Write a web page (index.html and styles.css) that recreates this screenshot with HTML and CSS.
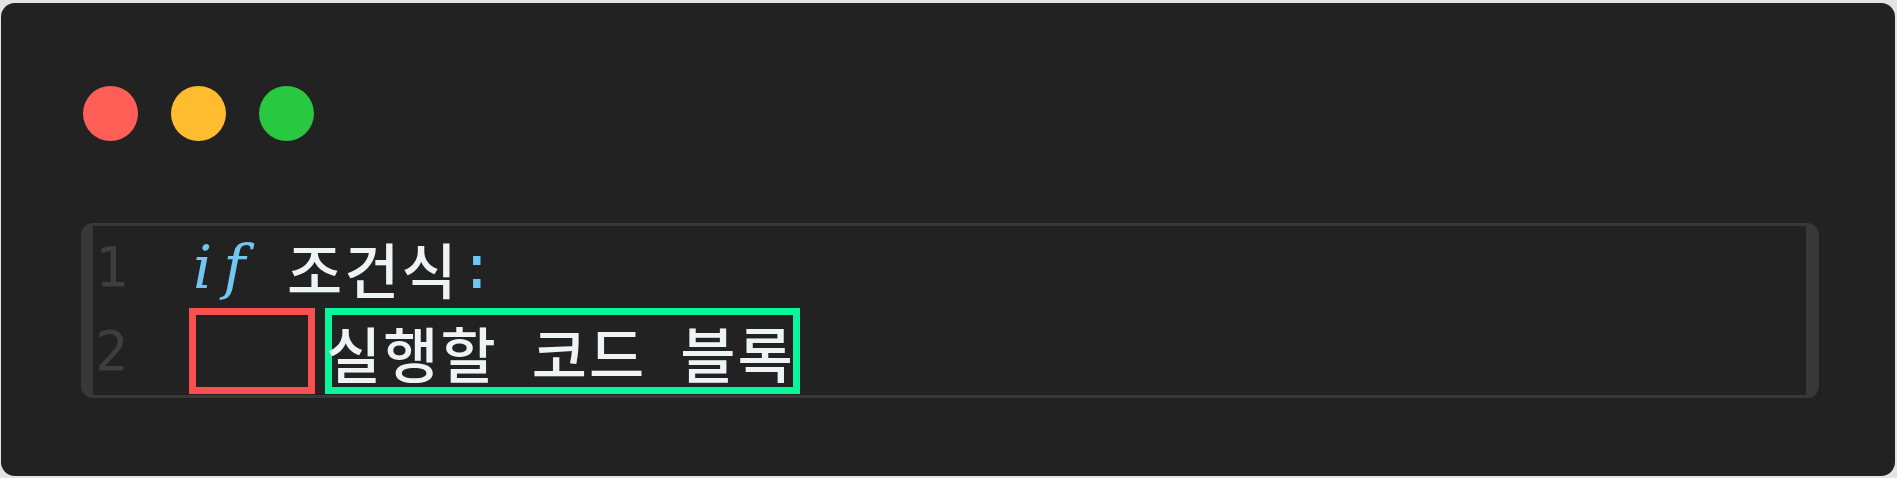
FILE: index.html
```html
<!DOCTYPE html>
<html lang="ko">
<head>
<meta charset="utf-8">
<title>if 조건식</title>
<link rel="stylesheet" href="styles.css">
</head>
<body>
<div class="window">
  <div class="dots">
    <span class="dot red"></span>
    <span class="dot yellow"></span>
    <span class="dot green"></span>
  </div>
  <div class="editor">
    <div class="gutter">
      <div class="ln ln1">1</div>
      <div class="ln ln2">2</div>
    </div>
    <div class="code">
      <div class="line line1"><span class="kw">if</span> 조건식<span class="punct">:</span></div>
      <div class="line line2"><span class="indent"></span><span class="block"><span class="block-text">실행할 코드 블록</span></span></div>
    </div>
  </div>
</div>
</body>
</html>
```
FILE: styles.css
```css
html, body {
  margin: 0;
  padding: 0;
  background: #e4e4e4;
}
body {
  padding: 3px 2px 2px 1px;
  height: 478px;
  box-sizing: border-box;
}
.window {
  height: 473px;
  box-sizing: border-box;
  background: #222222;
  border-radius: 14px;
  padding: 83px 76px 0 80px;
}
.dots {
  display: flex;
  gap: 33px;
  padding-left: 2px;
  height: 55px;
}
.dot {
  width: 55px;
  height: 55px;
  border-radius: 50%;
}
.red { background: #ff5f57; }
.yellow { background: #febc2e; }
.green { background: #28c840; }
.editor {
  margin-top: 82px;
  display: flex;
  height: 175px;
  box-sizing: border-box;
  border: 3px solid #383838;
  border-left-width: 12px;
  border-right-width: 13px;
  border-radius: 12px;
  font-family: "DejaVu Sans Mono", "Noto Sans CJK KR", monospace;
  font-size: 60px;
}
.gutter {
  width: 94px;
  padding-left: 2px;
  color: #3e3e3e;
  font-family: "DejaVu Sans Mono", monospace;
  font-size: 55px;
}
.ln {
  display: flex;
  align-items: center;
}
.ln1 { height: 82px; }
.ln2 { height: 86px; }
.code {
  color: #eef4f4;
  font-weight: 500;
  letter-spacing: 2px;
  word-spacing: -4px;
}
.line {
  display: flex;
  align-items: center;
  white-space: pre;
}
.line1 { height: 82px; padding-left: 4px; }
.line2 { height: 86px; }
.kw {
  display: inline-block;
  width: 60px;
  color: #72c6f2;
  font-family: "DejaVu Serif", serif;
  font-style: italic;
  font-weight: 400;
  font-size: 60px;
  letter-spacing: 11px;
  box-sizing: border-box;
}
.punct { color: #72c6f2; }
.indent {
  display: inline-block;
  width: 112px;
  height: 72px;
  border: 7px solid #fa5050;
}
.block {
  display: flex;
  align-items: center;
  height: 72px;
  margin-left: 10px;
  border: 7px solid #08f59a;
}
.block-text {
  margin-left: -6px;
  margin-right: -2px;
}
```
